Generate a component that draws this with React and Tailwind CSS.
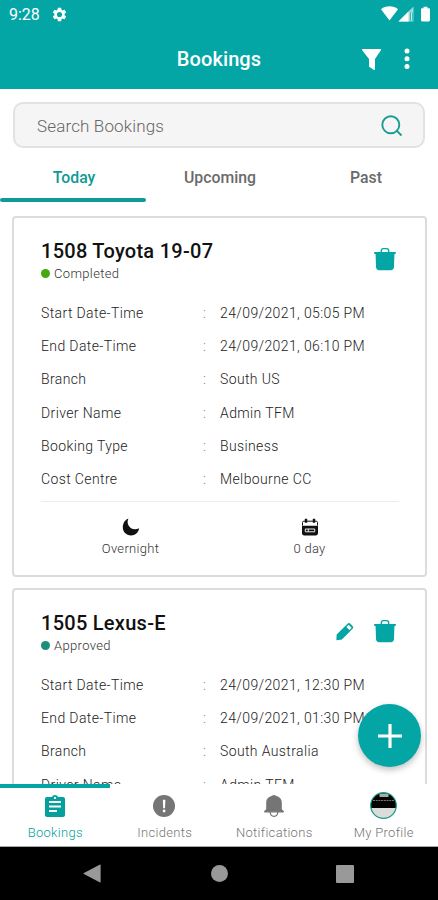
import React, { useState } from "react";

const reservas = [
    {
        id: 1,
        titulo: "1508 Toyota 19-07",
        estado: "Completed",
        punto: "bg-[#43a90c]",
        editable: false,
        filas: [
            ["Start Date-Time", "24/09/2021, 05:05 PM"],
            ["End Date-Time", "24/09/2021, 06:10 PM"],
            ["Branch", "South US"],
            ["Driver Name", "Admin TFM"],
            ["Booking Type", "Business"],
            ["Cost Centre", "Melbourne CC"],
        ],
    },
    {
        id: 2,
        titulo: "1505 Lexus-E",
        estado: "Approved",
        punto: "bg-[#1b8f7b]",
        editable: true,
        filas: [
            ["Start Date-Time", "24/09/2021, 12:30 PM"],
            ["End Date-Time", "24/09/2021, 01:30 PM"],
            ["Branch", "South Australia"],
            ["Driver Name", "Admin TFM"],
        ],
    },
];

const tabs = ["Today", "Upcoming", "Past"];

// --- ICONS ---
const GearIcon = () => (
    <svg className="w-[17px] h-[17px]" viewBox="0 0 24 24" fill="currentColor">
        <path d="M19.14 12.94c.04-.3.06-.61.06-.94 0-.32-.02-.64-.07-.94l2.03-1.58a.49.49 0 0 0 .12-.61l-1.92-3.32a.49.49 0 0 0-.59-.22l-2.39.96a7 7 0 0 0-1.62-.94l-.36-2.54a.48.48 0 0 0-.48-.41h-3.84a.47.47 0 0 0-.47.41l-.36 2.54c-.59.24-1.13.57-1.62.94l-2.39-.96a.48.48 0 0 0-.59.22L2.74 8.87a.47.47 0 0 0 .12.61l2.03 1.58c-.05.3-.09.63-.09.94s.02.64.07.94l-2.03 1.58a.49.49 0 0 0-.12.61l1.92 3.32c.12.22.37.29.59.22l2.39-.96c.5.38 1.03.7 1.62.94l.36 2.54c.05.24.24.41.48.41h3.84c.24 0 .44-.17.47-.41l.36-2.54a7 7 0 0 0 1.62-.94l2.39.96c.22.08.47 0 .59-.22l1.92-3.32a.47.47 0 0 0-.12-.61zM12 15.6a3.6 3.6 0 1 1 0-7.2 3.6 3.6 0 0 1 0 7.2z" />
    </svg>
);

const StatusIcons = () => (
    <svg className="w-[50px] h-4" viewBox="0 0 50 16" fill="currentColor">
        <path d="M0 3.2C4.8-.6 12.2-.6 17 3.2L8.500 14.6z" />
        <path d="M32.500.5v15h-15z" opacity=".6" />
        <path d="M27.500 5.500v10h-10z" />
        <path d="M30.300 6.500v8" stroke="#03a6a5" strokeWidth="2.600" />
        <path d="M30.300 6.500v8" stroke="currentColor" strokeWidth="1" />
        <path d="M42.500.8h4v1.400h1.200c.8 0 1.300.5 1.300 1.300V14c0 .9-.5 1.400-1.300 1.400h-6.400c-.8 0-1.300-.5-1.300-1.400V3.500c0-.8.5-1.300 1.300-1.300h1.200z" />
    </svg>
);

const FilterIcon = () => (
    <svg className="w-[19px] h-[21px]" viewBox="0 0 19 21" fill="currentColor">
        <path d="M.6 0h17.800c.6 0 .8.6.5 1.200L13 10v10.400c0 .6-.6.800-1 .5l-4.500-2.800c-.3-.2-.5-.5-.5-.9V10L.2 1.200C-.1.6.1 0 .6 0z" />
    </svg>
);

const DotsIcon = () => (
    <svg className="w-[6px] h-[22px]" viewBox="0 0 6 22" fill="currentColor">
        <circle cx="3" cy="3" r="2.500" />
        <circle cx="3" cy="10.800" r="2.500" />
        <circle cx="3" cy="18.600" r="2.500" />
    </svg>
);

const SearchIcon = () => (
    <svg className="w-[22px] h-[22px]" viewBox="0 0 22 22" fill="none" stroke="currentColor" strokeWidth="1.900">
        <circle cx="9.800" cy="9.800" r="8.500" />
        <path d="M15.200 15.200l5.300 5.300" />
    </svg>
);

const TrashIcon = () => (
    <svg className="w-[22px] h-[24px]" viewBox="0 0 22 24" fill="currentColor">
        <path d="M7.300 6V4c0-1.500.8-2.400 2.100-2.400h3.200c1.300 0 2.100.9 2.100 2.400v2" fill="none" stroke="currentColor" strokeWidth="1.400" />
        <path d="M.6 5h20.800c.4 0 .6.300.6.800 0 .8-.6 1.300-1.600 1.400L20 20c-.1 2-1.200 3.200-3.200 3.200H5.200C3.200 23.200 2.100 22 2 20L1.600 7.200C.6 7.100 0 6.600 0 5.800 0 5.300.2 5 .6 5z" />
    </svg>
);

const PencilIcon = () => (
    <svg className="w-[18px] h-[19px]" viewBox="0 0 19 19" fill="currentColor">
        <path fillRule="evenodd" d="M.7 12.600L12.200 1.300c.9-.9 2.100-.9 3 0l2.300 2.300c.9.900.9 2.100 0 3L6.300 18l-5.200.7c-.5 0-.7-.2-.7-.7zM11 4.700l3.200 3.300 2.300-2.400-3.200-3.200z" />
    </svg>
);

const MoonIcon = () => (
    <svg className="w-[18px] h-[18px]" viewBox="0 0 18 18" fill="currentColor">
        <path d="M6.500.4C5.500 2 5.300 4.600 6.300 6.900c1.800 4 6.400 5.600 10.900 3.400-.8 4.200-4 7.200-8.200 7.200C4.300 17.500.8 14 .8 9.300.8 5 3.100 1.700 6.500.4z" />
    </svg>
);

const CalendarIcon = () => (
    <svg className="w-[18px] h-[18px]" viewBox="0 0 18 18">
        <path d="M1.500 7.500V4.500c0-.8.500-1.300 1.300-1.300h12.400c.8 0 1.300.5 1.300 1.300v3" fill="none" stroke="currentColor" strokeWidth="1" />
        <path d="M5 .8v4M13 .8v4" stroke="currentColor" strokeWidth="2.400" />
        <path d="M1 7.800h16V15c0 1.600-.8 2.400-2.400 2.400H3.400C1.800 17.400 1 16.600 1 15z" fill="currentColor" />
        <path d="M4.300 11h9.400v2.800H4.300z" fill="none" stroke="#fff" strokeWidth=".9" />
        <path d="M7.300 11v2.800" stroke="#fff" strokeWidth=".9" />
    </svg>
);

const ClipboardIcon = () => (
    <svg className="w-[20px] h-[22px]" viewBox="0 0 20 22" fill="currentColor">
        <path fillRule="evenodd" d="M2 2h5C7.400.8 8.500 0 10 0s2.600.8 3 2h5c1.100 0 2 .9 2 2v16c0 1.100-.9 2-2 2H2c-1.100 0-2-.9-2-2V4c0-1.100.9-2 2-2zm8-.300a1.200 1.200 0 1 0 0 2.400 1.200 1.200 0 0 0 0-2.400zM4 6v2h12V6zm0 4.500v2h12v-2zM4 15v2h8v-2z" />
    </svg>
);

const AlertIcon = () => (
    <svg className="w-[22px] h-[22px]" viewBox="0 0 22 22">
        <circle cx="11" cy="11" r="11" fill="currentColor" />
        <path d="M9.800 4.800h2.600l-.4 8.400h-1.800z" fill="#fff" />
        <circle cx="11.100" cy="16" r="1.400" fill="#fff" />
    </svg>
);

const BellIcon = () => (
    <svg className="w-[20px] h-[22px]" viewBox="0 0 20 22" fill="currentColor">
        <path d="M10 0c.9 0 1.500.3 1.800.8 3.900.8 6 3.400 6 7.200v6.300l1.900 1.600c.6.600.3 1.700-.6 1.700H.9c-.9 0-1.200-1.100-.6-1.700l1.900-1.600V8c0-3.800 2.100-6.400 6-7.200C8.500.3 9.100 0 10 0z" />
        <path d="M6.200 16.800h7.600c0 2.800-1.500 4.500-3.800 4.500s-3.800-1.700-3.800-4.500z" fill="#fff" stroke="currentColor" strokeWidth="1.200" />
    </svg>
);

const AvatarIcon = () => (
    <svg className="w-[27px] h-[27px]" viewBox="0 0 27 27">
        <defs>
            <clipPath id="avatar"><circle cx="13.500" cy="13.500" r="12.800" /></clipPath>
        </defs>
        <g clipPath="url(#avatar)">
            <rect width="27" height="27" fill="#000" />
            <rect x="9.500" y="1.500" width="9" height="3.500" fill="#aaa" />
            <path d="M3 8.500h21" stroke="#777" strokeWidth="1" strokeDasharray="2 .7" />
            <rect y="16" width="27" height="11" fill="#dcdcdc" />
        </g>
        <circle cx="13.500" cy="13.500" r="12.800" fill="none" stroke="#1d9c8c" strokeWidth="1.200" />
    </svg>
);

const menu = [
    { nombre: "Bookings", Icono: ClipboardIcon },
    { nombre: "Incidents", Icono: AlertIcon },
    { nombre: "Notifications", Icono: BellIcon },
    { nombre: "My Profile", Icono: AvatarIcon },
];

function BookingCard({ reserva }) {
    return (
        <article className="h-[361px] shrink-0 rounded-[4px] border-2 border-[#dcdcdc] bg-white pl-[27px] pr-[26px] pt-[21px]">
            <div className="flex justify-between">
                <div>
                    <h2 className="text-[20px] leading-6 font-medium tracking-[0.27px] text-[#111]">{reserva.titulo}</h2>
                    <div className="flex items-center gap-[4px] h-5 pt-px">
                        <span className={`w-[9px] h-[9px] mb-px rounded-full ${reserva.punto}`}></span>
                        <span className="text-[13px] leading-5 font-light tracking-[0.35px] text-[#333]">{reserva.estado}</span>
                    </div>
                </div>
                <div className="flex items-center gap-[20px] h-[40px] pr-[3px] text-[#03a6a5]">
                    {reserva.editable && <button><PencilIcon /></button>}
                    <button><TrashIcon /></button>
                </div>
            </div>

            <dl className="mt-[14px]">
                {reserva.filas.map(([campo, valor]) => (
                    <div key={campo} className="flex items-center h-[33.2px] text-[14px] font-light tracking-[0.38px] text-[#222]">
                        <dt className="w-[162px]">{campo}</dt>
                        <span className="w-[17px] text-[#777]">:</span>
                        <dd>{valor}</dd>
                    </div>
                ))}
            </dl>

            <div className="mt-[5px] border-t border-[#ececec] grid grid-cols-2 pt-[16px] text-[#111]">
                <div className="flex flex-col items-center gap-[3px]">
                    <MoonIcon />
                    <span className="text-[13px] leading-5 font-light tracking-[0.3px] text-[#333]">Overnight</span>
                </div>
                <div className="flex flex-col items-center gap-[3px]">
                    <CalendarIcon />
                    <span className="text-[13px] leading-5 font-light tracking-[0.3px] text-[#333]">0 day</span>
                </div>
            </div>
        </article>
    );
}

export default function App() {
    const [tab, setTab] = useState("Today");
    const [seccion, setSeccion] = useState("Bookings");

    return (
        <div className="relative flex flex-col w-full h-screen overflow-hidden bg-white font-['Roboto',sans-serif]">
            <header className="h-[89px] shrink-0 bg-[#03a6a5] text-white">
                <div className="flex items-center justify-between h-[28px] pl-[9px] pr-[7px]">
                    <div className="flex items-center gap-[11px]">
                        <span className="text-[16px] pt-px">9:28</span>
                        <GearIcon />
                    </div>
                    <StatusIcons />
                </div>
                <div className="grid grid-cols-[1fr_auto_1fr] items-center h-[61px] pt-px">
                    <span></span>
                    <h1 className="text-[20px] font-medium tracking-[0.1px]">Bookings</h1>
                    <div className="flex items-center justify-end gap-[23px] pr-[28px]">
                        <button><FilterIcon /></button>
                        <button><DotsIcon /></button>
                    </div>
                </div>
            </header>

            <div className="shrink-0 px-[13px] pt-[13px]">
                <label className="flex items-center justify-between h-[46px] rounded-[10px] border-2 border-[#e2e2e2] bg-[#f5f5f5] pl-[22px] pr-[20px] pt-px text-[#1a9c92]">
                    <input type="text" placeholder="Search Bookings"
                        className="w-[250px] pt-[2px] bg-transparent outline-none text-[17px] font-light tracking-[0.15px] text-[#333] placeholder:text-[#666]" />
                    <SearchIcon />
                </label>
            </div>

            <nav className="grid grid-cols-3 shrink-0 h-[55px]">
                {tabs.map((t) => (
                    <button key={t} onClick={() => setTab(t)}
                        className={`flex flex-col items-center justify-end text-[15.8px] leading-6 font-medium ${t === tab ? "text-[#0f9b93]" : "text-[#6a6a6a]"}`}>
                        <span className="pl-[2px] pb-[8px]">{t}</span>
                        <span className={`w-full h-1 mb-px rounded-full ${t === tab ? "bg-[#0f9b93]" : ""}`}></span>
                    </button>
                ))}
            </nav>

            <main className="flex flex-col flex-1 min-h-0 gap-[11px] overflow-hidden pl-[12px] pr-[11px] pt-[13px]">
                {reservas.map((r) => <BookingCard key={r.id} reserva={r} />)}
            </main>

            <footer className="grid grid-cols-4 shrink-0 h-[63px] border-b border-[#aaa] bg-white">
                {menu.map(({ nombre, Icono }) => (
                    <button key={nombre} onClick={() => setSeccion(nombre)}
                        className={`flex flex-col items-center border-t-4 ${nombre === seccion ? "border-[#03a6a5] text-[#03a09c]" : "border-transparent text-[#757575]"}`}>
                        <span className="flex items-center justify-center h-[35px]"><Icono /></span>
                        <span className="pl-px text-[13px] leading-5 font-light tracking-[0.3px]">{nombre}</span>
                    </button>
                ))}
            </footer>

            {/* Android navigation bar */}
            <div className="flex items-center shrink-0 h-[53px] bg-black text-[#999]">
                <svg className="ml-[83px] w-[18px] h-[19px]" viewBox="0 0 18 19" fill="currentColor">
                    <path d="M16.600.7c.6-.3 1 0 1 .6v16.400c0 .6-.4.900-1 .6L.900 10.100c-.5-.3-.5-.8 0-1.100z" />
                </svg>
                <span className="ml-[110px] w-[17px] h-[17px] rounded-full bg-[#999]"></span>
                <span className="ml-[108px] w-[18px] h-[18px] rounded-[1px] bg-[#999]"></span>
            </div>

            {/* FLOATING BUTTON */}
            <button className="absolute right-[17px] bottom-[133px] flex items-center justify-center w-[63px] h-[63px] rounded-full bg-[#03a6a5] shadow-[0_3px_6px_rgba(0,0,0,0.25)]">
                <svg className="w-[24px] h-[24px]" viewBox="0 0 24 24" stroke="#fff" strokeWidth="3.200">
                    <path d="M12 0v24M0 12h24" />
                </svg>
            </button>
        </div>
    );
}
